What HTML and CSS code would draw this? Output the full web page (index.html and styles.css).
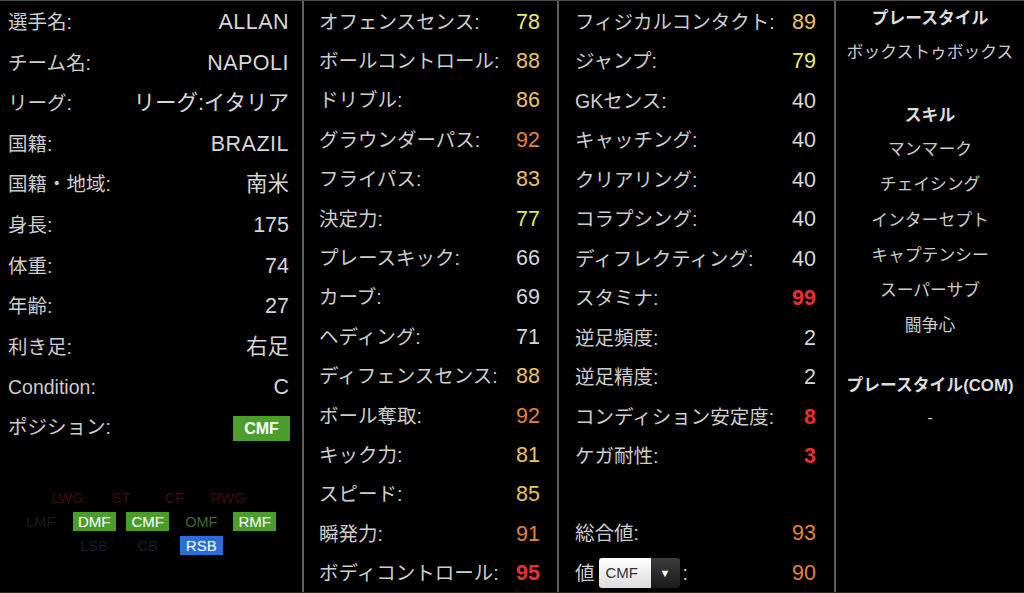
FILE: index.html
```html
<!DOCTYPE html>
<html lang="ja">
<head>
<meta charset="utf-8">
<title>選手データ</title>
<link rel="stylesheet" href="styles.css">
</head>
<body>
<div class="page">
  <section class="col col-profile">
    <div class="row"><span class="label">選手名:</span><span class="val caps">ALLAN</span></div>
    <div class="row"><span class="label">チーム名:</span><span class="val caps">NAPOLI</span></div>
    <div class="row"><span class="label">リーグ:</span><span class="val">リーグ:イタリア</span></div>
    <div class="row"><span class="label">国籍:</span><span class="val caps">BRAZIL</span></div>
    <div class="row"><span class="label">国籍・地域:</span><span class="val">南米</span></div>
    <div class="row"><span class="label">身長:</span><span class="val">175</span></div>
    <div class="row"><span class="label">体重:</span><span class="val">74</span></div>
    <div class="row"><span class="label">年齢:</span><span class="val">27</span></div>
    <div class="row"><span class="label">利き足:</span><span class="val">右足</span></div>
    <div class="row"><span class="label">Condition:</span><span class="val">C</span></div>
    <div class="row row-pos"><span class="label">ポジション:</span><span class="badge badge-main">CMF</span></div>
    <div class="pitch">
      <span class="pos fw c2">LWG</span>
      <span class="pos fw c4">ST</span>
      <span class="pos fw c6">CF</span>
      <span class="pos fw c8">RWG</span>
      <span class="pos mf-off c1">LMF</span>
      <span class="pos box green c3">DMF</span>
      <span class="pos box green c5">CMF</span>
      <span class="pos mf-dim c7">OMF</span>
      <span class="pos box green c9">RMF</span>
      <span class="pos df c3">LSB</span>
      <span class="pos df c5">CB</span>
      <span class="pos box blue c7">RSB</span>
    </div>
  </section>

  <section class="col col-stats">
    <div class="srow"><span class="label">オフェンスセンス:</span><span class="val r-yellow">78</span></div>
    <div class="srow"><span class="label">ボールコントロール:</span><span class="val r-gold">88</span></div>
    <div class="srow"><span class="label">ドリブル:</span><span class="val r-gold">86</span></div>
    <div class="srow"><span class="label">グラウンダーパス:</span><span class="val r-orange">92</span></div>
    <div class="srow"><span class="label">フライパス:</span><span class="val r-gold">83</span></div>
    <div class="srow"><span class="label">決定力:</span><span class="val r-lime">77</span></div>
    <div class="srow"><span class="label">プレースキック:</span><span class="val">66</span></div>
    <div class="srow"><span class="label">カーブ:</span><span class="val">69</span></div>
    <div class="srow"><span class="label">ヘディング:</span><span class="val">71</span></div>
    <div class="srow"><span class="label">ディフェンスセンス:</span><span class="val r-gold">88</span></div>
    <div class="srow"><span class="label">ボール奪取:</span><span class="val r-orange">92</span></div>
    <div class="srow"><span class="label">キック力:</span><span class="val r-gold">81</span></div>
    <div class="srow"><span class="label">スピード:</span><span class="val r-gold">85</span></div>
    <div class="srow"><span class="label">瞬発力:</span><span class="val r-orange">91</span></div>
    <div class="srow"><span class="label">ボディコントロール:</span><span class="val r-red">95</span></div>
  </section>

  <section class="col col-stats2">
    <div class="srow"><span class="label">フィジカルコンタクト:</span><span class="val r-gold">89</span></div>
    <div class="srow"><span class="label">ジャンプ:</span><span class="val r-yellow">79</span></div>
    <div class="srow"><span class="label">GKセンス:</span><span class="val">40</span></div>
    <div class="srow"><span class="label">キャッチング:</span><span class="val">40</span></div>
    <div class="srow"><span class="label">クリアリング:</span><span class="val">40</span></div>
    <div class="srow"><span class="label">コラプシング:</span><span class="val">40</span></div>
    <div class="srow"><span class="label">ディフレクティング:</span><span class="val">40</span></div>
    <div class="srow"><span class="label">スタミナ:</span><span class="val r-red">99</span></div>
    <div class="srow"><span class="label">逆足頻度:</span><span class="val">2</span></div>
    <div class="srow"><span class="label">逆足精度:</span><span class="val">2</span></div>
    <div class="srow"><span class="label">コンディション安定度:</span><span class="val r-red">8</span></div>
    <div class="srow"><span class="label">ケガ耐性:</span><span class="val r-red">3</span></div>
    <div class="spacer"></div>
    <div class="srow"><span class="label">総合値:</span><span class="val r-orange">93</span></div>
    <div class="srow srow-sel">
      <span class="label sel-label">値<span class="select"><span class="select-text">CMF</span><span class="select-btn">▼</span></span>:</span>
      <span class="val r-orange">90</span>
    </div>
  </section>

  <section class="col col-side">
    <div class="side-title">プレースタイル</div>
    <div class="side-item">ボックストゥボックス</div>
    <div class="side-title sect">スキル</div>
    <div class="side-item">マンマーク</div>
    <div class="side-item">チェイシング</div>
    <div class="side-item">インターセプト</div>
    <div class="side-item">キャプテンシー</div>
    <div class="side-item">スーパーサブ</div>
    <div class="side-item">闘争心</div>
    <div class="side-title sect sect-com">プレースタイル(COM)</div>
    <div class="side-item">-</div>
  </section>
</div>
</body>
</html>
```

FILE: styles.css
```css
* { box-sizing: border-box; }

html, body {
  margin: 0;
  padding: 0;
  background: #000;
}

body {
  font-family: "Liberation Sans", "Noto Sans CJK JP", sans-serif;
  color: #cdcdcd;
  font-size: 19.5px;
}

.page {
  display: flex;
  width: 1024px;
  height: 593px;
  border-top: 1px solid #4a4a4a;
  border-bottom: 1px solid #262626;
  overflow: hidden;
}

.col {
  display: flex;
  flex-direction: column;
}

.col-profile {
  width: 302px;
  padding: 0 13px 0 8px;
}

.col-stats {
  width: 255px;
  border-left: 2px solid #5e5e5e;
  padding: 0 17px 0 15px;
}

.col-stats2 {
  width: 277px;
  border-left: 2px solid #5e5e5e;
  padding: 0 18px 0 16px;
}

.col-side {
  flex: 1;
  border-left: 2px solid #5e5e5e;
  align-items: center;
  margin-top: -1px;
  font-size: 16.8px;
}

.row,
.srow {
  display: flex;
  align-items: baseline;
  justify-content: space-between;
}

.row { height: 40.6px; padding-top: 9px; }
.srow { height: 39.5px; padding-top: 8.5px; }

.label,
.val {
  line-height: 24px;
  white-space: nowrap;
}

.spacer { height: 37.5px; }

.val {
  color: #d6d6d6;
  font-size: 21.5px;
}

.caps { letter-spacing: 0.5px; }

.r-yellow { color: #eeea72; }
.r-lime { color: #dde66a; }
.r-gold { color: #efc35c; }
.r-orange { color: #e4843f; }
.r-red { color: #e6302e; font-weight: bold; }

/* position row */
.row-pos { padding-top: 8px; }

.badge {
  display: inline-flex;
  align-items: center;
  justify-content: center;
  color: #fff;
  font-weight: bold;
}

.badge-main {
  width: 57px;
  height: 25px;
  margin-right: -1px;
  background: #4c9e2c;
  font-size: 16px;
}

/* mini pitch of positions */
.pitch {
  margin-top: 38px;
  margin-left: 6px;
  display: grid;
  grid-template-columns: repeat(10, 26.75px);
  grid-auto-rows: 24px;
  align-items: center;
  font-size: 14.5px;
}

.pos {
  grid-column-end: span 2;
  justify-self: center;
  display: flex;
  align-items: center;
  justify-content: center;
}

.c1 { grid-column-start: 1; }
.c2 { grid-column-start: 2; }
.c3 { grid-column-start: 3; }
.c4 { grid-column-start: 4; }
.c5 { grid-column-start: 5; }
.c6 { grid-column-start: 6; }
.c7 { grid-column-start: 7; }
.c8 { grid-column-start: 8; }
.c9 { grid-column-start: 9; }

.fw { grid-row: 1; color: #3c0e0e; }
.mf-off, .mf-dim, .green { grid-row: 2; }
.df, .blue { grid-row: 3; }

.mf-off { color: #1c1c1c; }
.mf-dim { color: #3c6a2c; }
.df { color: #141c36; }

.box {
  width: 43px;
  height: 19px;
  color: #fff;
  font-size: 15px;
}
.green { background: #4c9e2c; }
.blue { background: #2a6fd8; }

/* select in total row */
.srow-sel { align-items: center; padding-top: 2px; }

.sel-label {
  display: flex;
  align-items: center;
}

.select {
  display: inline-flex;
  height: 30px;
  margin: 0 3px 0 4px;
  border-radius: 3px;
  overflow: hidden;
}

.select-text {
  width: 52px;
  padding-left: 7px;
  display: flex;
  align-items: center;
  background: linear-gradient(#ffffff, #dcdcdc);
  color: #333;
  font-size: 15px;
}

.select-btn {
  width: 29px;
  display: flex;
  align-items: center;
  justify-content: center;
  background: linear-gradient(#3c3c3c, #1a1a1a);
  color: #fff;
  font-size: 11px;
}

/* side column */
.side-title {
  height: 33.5px;
  display: flex;
  align-items: center;
  font-weight: bold;
  color: #dcdcdc;
}

.side-title.sect { margin-top: 28px; }
.side-title.sect-com { margin-top: 25px; }

.side-item {
  height: 35.3px;
  display: flex;
  align-items: center;
  color: #cbcbcb;
}
```
